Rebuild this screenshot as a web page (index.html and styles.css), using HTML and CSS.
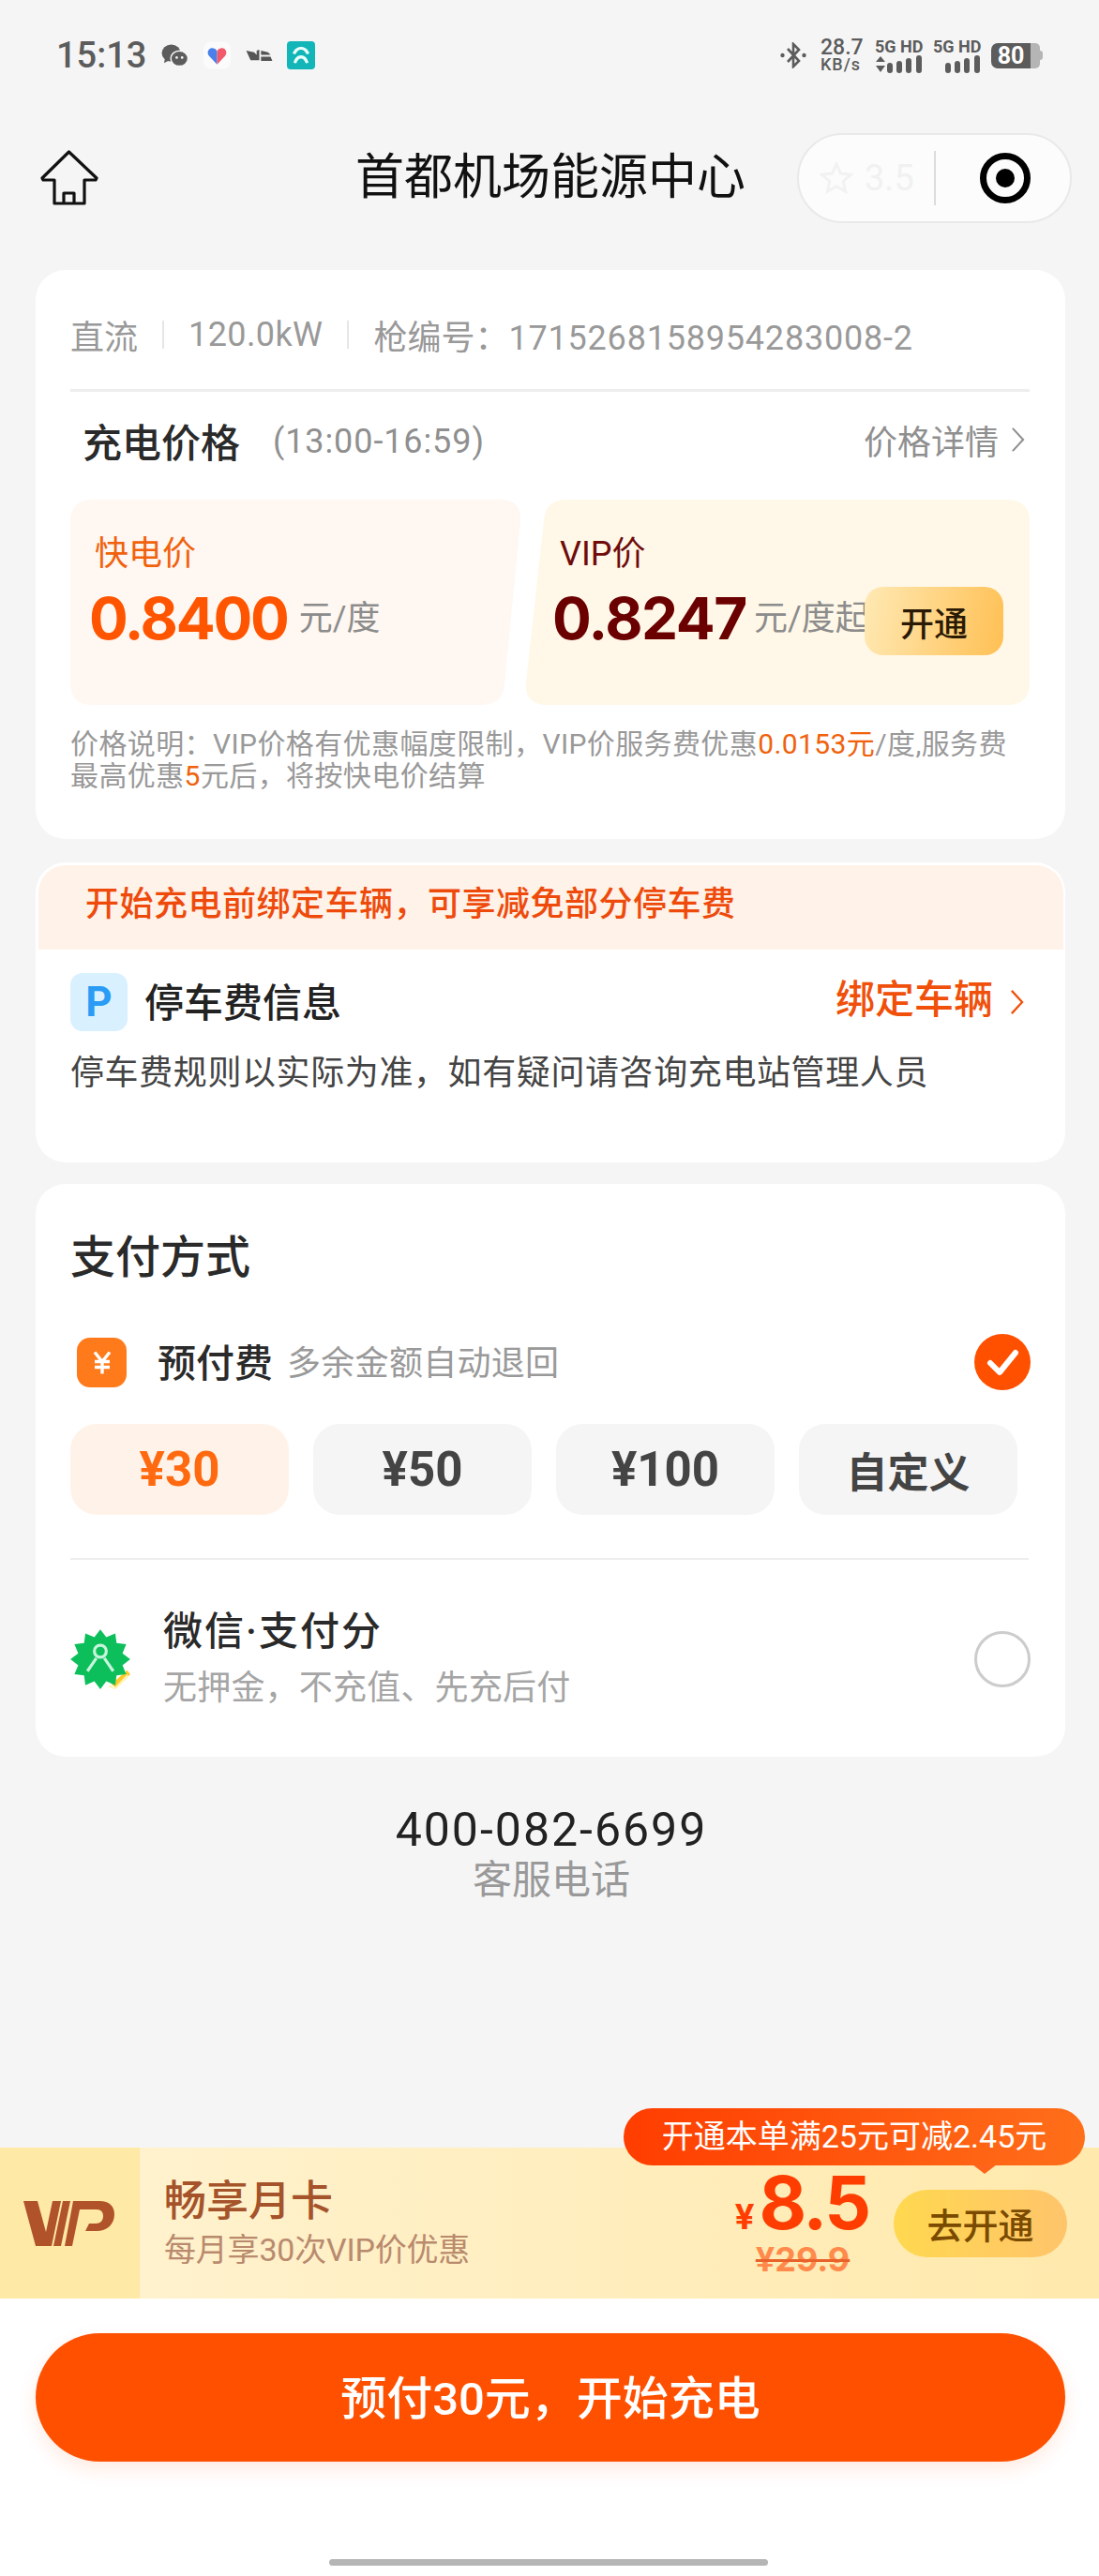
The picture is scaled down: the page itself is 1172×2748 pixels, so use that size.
FILE: index.html
```html
<!DOCTYPE html>
<html lang="zh-CN">
<head>
<meta charset="utf-8">
<title>首都机场能源中心</title>
<link rel="stylesheet" href="styles.css">
</head>
<body>
<div class="page">
  <header class="status">
    <div class="status-left">
      <span class="time">15:13</span>
      <svg class="ic-wechat" viewBox="0 0 30 28"><ellipse cx="11" cy="11" rx="10.5" ry="9.5" fill="#5c5c5c"/><path d="M4 17l-1 5 6-3z" fill="#5c5c5c"/><ellipse cx="20" cy="17" rx="9.5" ry="8.5" fill="#5c5c5c" stroke="#f6f6f6" stroke-width="1.5"/><circle cx="17" cy="16" r="1.4" fill="#f6f6f6"/><circle cx="23" cy="16" r="1.4" fill="#f6f6f6"/></svg>
      <svg class="ic-heart" viewBox="0 0 30 30"><rect width="30" height="30" rx="8" fill="#fbfbfb"/><path d="M15 25L6 15.500C3 11.500 6 6.500 10 7c2.500.3 4 1.500 5 3.500z" fill="#4a80ea"/><path d="M15 25l9-9.500C27 11.500 24 6.500 20 7c-2.500.3-4 1.500-5 3.500z" fill="#f2596b"/></svg>
      <svg class="ic-ll" viewBox="0 0 30 14"><path d="M0 1l9 2 3 3V1l3-1v12H5z" fill="#555"/><path d="M17 1l8 2 3 3H17zM17 8h11l2 5H17z" fill="#555"/></svg>
      <svg class="ic-nio" viewBox="0 0 30 30"><rect width="30" height="30" rx="4" fill="#12b5b8"/><path d="M6 13c2-5 5-7 9-7s7 2 9 7l-3 1c-1.500-3-3-5-6-5s-4.500 2-6 5z" fill="#eafffb"/><path d="M7 23c1-5 4-8 8-8s7 3 8 8l-3 .5c-1-3-2.500-5-5-5s-4 2-5 5z" fill="#eafffb"/></svg>
    </div>
    <div class="status-right">
      <svg class="ic-bt" viewBox="0 0 28 28"><path d="M8 7l12 13-6 6V2l6 6L8 21" fill="none" stroke="#5c5c5c" stroke-width="2.600"/><circle cx="2.500" cy="14" r="2.200" fill="#5c5c5c"/><circle cx="25.500" cy="14" r="2.200" fill="#5c5c5c"/></svg>
      <div class="speed"><span class="speed-num">28.7</span><span class="speed-unit">KB/s</span></div>
      <div class="sim">
        <span class="sim-label">5G HD</span>
        <svg class="ic-signal" viewBox="0 0 52 19"><path d="M1 7l5-6 5 6zM1 11h10l-5 7z" fill="#5c5c5c"/><rect x="13" y="8" width="6" height="11" rx="3" fill="#5c5c5c"/><rect x="23" y="6" width="6" height="13" rx="3" fill="#5c5c5c"/><rect x="33" y="3" width="6" height="16" rx="3" fill="#5c5c5c"/><rect x="44" y="0" width="6" height="19" rx="3" fill="#5c5c5c"/></svg>
      </div>
      <div class="sim">
        <span class="sim-label">5G HD</span>
        <svg class="ic-signal" viewBox="0 0 52 19"><rect x="13" y="8" width="6" height="11" rx="3" fill="#5c5c5c"/><rect x="23" y="6" width="6" height="13" rx="3" fill="#5c5c5c"/><rect x="33" y="3" width="6" height="16" rx="3" fill="#5c5c5c"/><rect x="44" y="0" width="6" height="19" rx="3" fill="#5c5c5c"/></svg>
      </div>
      <div class="battery"><span class="battery-fill">80</span><span class="battery-rest"></span><span class="battery-tip"></span></div>
    </div>
  </header>

  <nav class="nav">
    <svg class="ic-home" viewBox="0 0 62 60"><path d="M30.500 2L2 30l1 2h12v25h32V32h12l1-2zM25 57V46h11v11" fill="none" stroke="#111" stroke-width="3.200" stroke-linejoin="round"/></svg>
    <h1 class="nav-title">首都机场能源中心</h1>
    <div class="capsule">
      <div class="capsule-rate">
        <svg class="ic-star" viewBox="0 0 36 36"><path d="M18 3l4.500 10 11 1.200-8.200 7.300 2.300 10.800L18 26.800 8.400 32.300l2.300-10.800L2.500 14.200l11-1.200z" fill="none" stroke="#f2f2f2" stroke-width="3"/></svg>
        <span>3.5</span>
      </div>
      <span class="capsule-line"></span>
      <svg class="ic-target" viewBox="0 0 56 56"><circle cx="28" cy="28" r="23.500" fill="none" stroke="#000" stroke-width="7"/><circle cx="28" cy="28" r="10" fill="#000"/></svg>
    </div>
  </nav>

  <main class="content">
    <section class="card card-price">
      <div class="spec">
        <span>直流</span><i class="spec-sep"></i>
        <span class="spec-power">120.0kW</span><i class="spec-sep"></i>
        <span>枪编号：<b class="spec-id">1715268158954283008-2</b></span>
      </div>
      <div class="price-head">
        <div class="price-head-left"><span class="price-title">充电价格</span><span class="price-time">(13:00-16:59)</span></div>
        <div class="more">价格详情<svg class="chev" viewBox="0 0 16 30"><path d="M2 2l12 13L2 28" fill="none" stroke="currentColor" stroke-width="2.200"/></svg></div>
      </div>
      <div class="price-boxes">
        <div class="pbox pbox-fast">
          <div class="pbox-label">快电价</div>
          <div class="pbox-row"><span class="pbox-num">0.8400</span><span class="pbox-unit">元/度</span></div>
        </div>
        <div class="pbox pbox-vip">
          <div class="pbox-label">VIP价</div>
          <div class="pbox-row"><span class="pbox-num">0.8247</span><span class="pbox-unit">元/度起</span></div>
          <div class="open-btn">开通</div>
        </div>
      </div>
      <p class="note">价格说明：VIP价格有优惠幅度限制，VIP价服务费优惠<em>0.0153元</em>/度,服务费<br>最高优惠<em>5</em>元后，将按快电价结算</p>
    </section>

    <section class="card card-park">
      <div class="park-banner">开始充电前绑定车辆，可享减免部分停车费</div>
      <div class="park-body">
        <div class="park-head">
          <div class="park-left"><span class="park-p">P</span><span class="park-title">停车费信息</span></div>
          <div class="park-bind">绑定车辆<svg class="chev" viewBox="0 0 16 30"><path d="M2 2l12 13L2 28" fill="none" stroke="currentColor" stroke-width="2.400"/></svg></div>
        </div>
        <p class="park-desc">停车费规则以实际为准，如有疑问请咨询充电站管理人员</p>
      </div>
    </section>

    <section class="card card-pay">
      <h2 class="pay-title">支付方式</h2>
      <div class="pay-row">
        <span class="yen-tile"><svg viewBox="0 0 22 26"><path d="M3 2l8 10 8-10M3 12h16M3 18h16M11 12v13" fill="none" stroke="#fff" stroke-width="3.400"/></svg></span>
        <span class="pay-name">预付费</span>
        <span class="pay-hint">多余金额自动退回</span>
        <svg class="check" viewBox="0 0 60 60"><circle cx="30" cy="30" r="30" fill="#ff5000"/><path d="M17 31l10 10 17-21" fill="none" stroke="#fff" stroke-width="6" stroke-linecap="round" stroke-linejoin="round"/></svg>
      </div>
      <div class="amounts">
        <div class="amount amount-on">¥30</div>
        <div class="amount">¥50</div>
        <div class="amount">¥100</div>
        <div class="amount amount-cn">自定义</div>
      </div>
      <div class="pay-line"></div>
      <div class="wx-row">
        <svg class="wx-badge" viewBox="0 0 64 64"><path d="M43 57l16-14 3 4-14 14z" fill="#ffc828"/><polygon fill="#0cbf5b" points="32,2 37.950,9.800 47,6 48.300,15.700 58,17 54.200,26 62,32 54.200,38 58,47 48.300,48.300 47,58 37.950,54.200 32,62 26,54.200 17,58 15.700,48.300 6,47 9.800,38 2,32 9.800,26 6,17 15.700,15.700 17,6 26,9.800"/><circle cx="32" cy="24" r="6" fill="none" stroke="#c7f5dc" stroke-width="3"/><path d="M28 31l-9 13M36 31l9 13" fill="none" stroke="#c7f5dc" stroke-width="3"/><path d="M42 58l4 3 13-14 1 3-13 12-7-2z" fill="#fff3b0"/></svg>
        <div class="wx-text">
          <div class="wx-name">微信·支付分</div>
          <div class="wx-hint">无押金，不充值、先充后付</div>
        </div>
        <span class="radio"></span>
      </div>
    </section>

    <div class="service">
      <div class="service-tel">400-082-6699</div>
      <div class="service-label">客服电话</div>
    </div>
  </main>

  <footer class="bottom">
    <div class="vip-bar">
      <div class="vip-logo">
        <svg viewBox="0 0 97 48"><path d="M0 0h15l9 33L31 0h9l-10 48H13z" fill="#b0532b"/><path d="M42 0h8l-10 48h-8z" fill="#b0532b"/><path d="M53 0h28c11 0 16 6 16 14 0 11-8 18-19 18H66l4-8h7c5 0 8-3 8-8 0-4-2-7-7-7H60l-8 39H44z" fill="#b0532b"/></svg>
      </div>
      <div class="vip-text">
        <div class="vip-name">畅享月卡</div>
        <div class="vip-desc">每月享30次VIP价优惠</div>
      </div>
      <div class="vip-price">
        <div class="vip-now"><span class="vip-yen">¥</span><span class="vip-big">8.5</span></div>
        <div class="vip-old">¥29.9</div>
      </div>
      <div class="vip-btn">去开通</div>
      <div class="vip-tip">开通本单满25元可减2.45元</div>
    </div>
    <div class="action">
      <div class="start-btn">预付30元，开始充电</div>
      <div class="home-bar"></div>
    </div>
  </footer>
</div>
</body>
</html>
```

FILE: styles.css
```css
* { box-sizing: border-box; }
html, body { margin: 0; padding: 0; }
body {
  font-family: Roboto, "Noto Sans CJK SC", sans-serif;
  color: #222;
}
p, h1, h2 { margin: 0; font-weight: 500; }
.page {
  width: 1172px;
  height: 2748px;
  background: #f5f5f5;
  display: flex;
  flex-direction: column;
  overflow: hidden;
}

/* status bar */
.status {
  height: 120px;
  padding: 40px 60px 0 60px;
  display: flex;
  justify-content: space-between;
  align-items: flex-start;
  color: #5c5c5c;
}
.status-left, .status-right { display: flex; align-items: center; height: 38px; }
.time { font-size: 38px; line-height: 38px; font-weight: 500; width: 112px; }
.ic-wechat { width: 29px; height: 27px; }
.ic-heart { width: 29px; height: 30px; margin-left: 16px; }
.ic-ll { width: 29px; height: 13px; margin-left: 16px; }
.ic-nio { width: 30px; height: 30px; margin-left: 15px; }
.ic-bt { width: 28px; height: 28px; }
.status-right { gap: 0; }
.speed { display: flex; flex-direction: column; margin-left: 15px; width: 58px; }
.speed-num { font-size: 23px; line-height: 19px; font-weight: 500; }
.speed-unit { font-size: 18px; line-height: 18px; font-weight: 500; letter-spacing: 1px; }
.sim { display: flex; flex-direction: column; width: 52px; margin-right: 10px; }
.sim-label { font-size: 18px; line-height: 18px; font-weight: 700; white-space: nowrap; }
.ic-signal { width: 52px; height: 19px; }
.battery { display: flex; align-items: center; margin-left: 0; }
.battery-fill {
  width: 42px; height: 27px; background: #5c5c5c; color: #fff;
  border-radius: 7px 0 0 7px;
  font-size: 25px; line-height: 27px; font-weight: 700; text-align: center;
}
.battery-rest { width: 10px; height: 27px; background: #b5b5b5; border-radius: 0 5px 5px 0; }
.battery-tip { width: 3px; height: 10px; background: #b5b5b5; border-radius: 0 3px 3px 0; }

/* nav */
.nav {
  height: 140px;
  margin-bottom: 28px;
  padding: 0 29px 0 43px;
  display: flex;
  align-items: center;
}
.ic-home { width: 62px; height: 60px; }
.nav-title {
  font-size: 52px; line-height: 62px; font-weight: 400; color: #111;
  margin-left: 274px;
  width: 416px;
  white-space: nowrap;
}
.capsule {
  margin-left: auto;
  width: 293px; height: 96px;
  border: 2px solid #e9e9e9;
  border-radius: 48px;
  background: #fcfcfc;
  display: flex;
  align-items: center;
}
.capsule-rate { display: flex; align-items: center; gap: 12px; padding-left: 22px; width: 144px; color: #f1f1f1; font-size: 38px; }
.ic-star { width: 36px; height: 36px; }
.capsule-line { width: 2px; height: 58px; background: #dcdcdc; }
.ic-target { width: 56px; height: 56px; margin-left: 46px; }

/* cards */
.content { padding: 0 36px 0 38px; display: flex; flex-direction: column; }
.card { background: #fff; border-radius: 32px; }
.chev { width: 15px; height: 28px; margin-left: 15px; flex: none; }

.card-price { height: 607px; padding: 0 38px 0 37px; margin-bottom: 25px; }
.spec {
  height: 130px;
  padding-top: 10px;
  border-bottom: 3px solid #eeeeee;
  display: flex;
  align-items: center;
  font-size: 36px;
  color: #999;
}
.spec-id { font-weight: 400; letter-spacing: .8px; }
.spec-power { letter-spacing: .4px; }
.spec-sep { width: 2px; height: 30px; background: #e6e6e6; margin: 0 26px; }
.price-head {
  height: 102px;
  margin-bottom: 13px;
  padding-left: 13px;
  display: flex;
  align-items: center;
  justify-content: space-between;
}
.price-head-left { display: flex; align-items: center; }
.price-title { font-size: 42px; font-weight: 500; color: #2a2a2a; }
.price-time { font-size: 36px; color: #8f8f8f; margin: 3px 0 0 35px; letter-spacing: .9px; }
.more { display: flex; align-items: center; font-size: 36px; color: #8f8f8f; padding-right: 5px; }
.more .chev { margin-left: 13px; }

.price-boxes { display: flex; gap: 5px; height: 219px; }
.pbox { height: 219px; position: relative; }
.pbox-fast {
  width: 480px;
  padding: 40px 0 0 26px;
  background: #fff7f1;
  clip-path: path("M24 0H458Q481 0 480 22L463 197Q461 219 438 219H24Q0 219 0 195V24Q0 0 24 0Z");
}
.pbox-vip {
  width: 538px;
  padding: 40px 0 0 37px;
  background: #fff8e8;
  clip-path: path("M44 0H514Q538 0 538 24V195Q538 219 514 219H24Q-1 219 1 195L20 22Q22 0 44 0Z");
}
.pbox-label { font-size: 36px; line-height: 36px; font-weight: 400; }
.pbox-fast .pbox-label { color: #f0620d; }
.pbox-vip .pbox-label { color: #6e0b0b; }
.pbox-row { display: flex; align-items: center; margin-top: 18px; white-space: nowrap; }
.pbox-num { font-family: Inter, Roboto, sans-serif; font-size: 62px; line-height: 66px; font-weight: 700; }
.pbox-fast .pbox-num { color: #ff5500; margin-left: -6px; letter-spacing: -2.200px; }
.pbox-vip .pbox-num { color: #6b0000; margin-left: -8px; letter-spacing: -1.400px; }
.pbox-unit { font-size: 36px; line-height: 44px; color: #8c8c8c; margin-left: 12px; }
.pbox-vip .pbox-unit { margin-left: 8px; }
.open-btn {
  position: absolute;
  left: 362px; top: 93px;
  width: 148px; height: 73px;
  border-radius: 20px;
  background: linear-gradient(100deg, #ffe9b4, #ffc054);
  color: #2a1a05;
  font-size: 36px; font-weight: 500;
  display: flex; align-items: center; justify-content: center;
}
.note { margin-top: 25px; font-size: 30px; line-height: 34px; color: #999; font-weight: 400; white-space: nowrap; letter-spacing: .4px; }
.note em { font-style: normal; color: #f0620d; }

.card-park { height: 320px; padding: 3px 2px 0 3px; margin-bottom: 23px; }
.park-banner {
  height: 90px;
  padding-left: 50px;
  background: #fff2e8;
  border-radius: 29px 29px 0 0;
  font-size: 36px; line-height: 84px; font-weight: 500; color: #ee4a0b;
  letter-spacing: .5px;
  white-space: nowrap;
}
.park-body { padding: 25px 42px 0 34px; }
.park-head { display: flex; align-items: center; justify-content: space-between; height: 62px; }
.park-left { display: flex; align-items: center; }
.park-p {
  width: 61px; height: 62px;
  background: #d9f0ff; border-radius: 13px;
  color: #2b9cf5;
  font-size: 44px; font-weight: 700; line-height: 62px; text-align: center;
}
.park-title { font-size: 42px; font-weight: 500; color: #222; margin: 0 0 5px 18px; }
.park-bind { display: flex; align-items: center; font-size: 42px; font-weight: 500; color: #f0500a; line-height: 52px; padding-bottom: 5px; }
.park-bind .chev { margin: 5px 0 0 18px; }
.park-desc { margin-top: 23px; font-size: 36px; line-height: 44px; font-weight: 400; color: #444; letter-spacing: .6px; white-space: nowrap; }

.card-pay { height: 611px; padding: 51px 37px 0 37px; }
.pay-title { font-size: 48px; line-height: 56px; font-weight: 500; color: #2a2a2a; }
.pay-row { margin-top: 53px; height: 60px; display: flex; align-items: center; }
.yen-tile {
  width: 53px; height: 53px; margin-left: 7px;
  background: #ff7a1a; border-radius: 14px;
  display: flex; align-items: center; justify-content: center;
}
.yen-tile svg { width: 22px; height: 27px; }
.pay-name { font-size: 41px; font-weight: 500; color: #2a2a2a; margin: 0 0 5px 33px; }
.pay-hint { font-size: 36px; color: #999; margin: 0 0 5px 15px; letter-spacing: .3px; }
.check { width: 60px; height: 60px; margin-left: auto; }
.amounts { margin-top: 36px; display: flex; gap: 26px; }
.amount {
  width: 233px; height: 97px;
  background: #f5f5f5;
  border-radius: 28px;
  color: #444;
  font-family: Roboto, sans-serif;
  font-size: 51px; font-weight: 700;
  display: flex; align-items: center; justify-content: center;
}
.amount-on { background: #fff3e9; color: #ff6a10; }
.amount-cn { font-family: "Noto Sans CJK SC", sans-serif; font-size: 44px; font-weight: 700; }
.pay-line { margin-top: 46px; height: 2px; background: #eeeeee; width: 1022px; }
.wx-row { margin-top: 52px; display: flex; align-items: center; }
.wx-badge { width: 68px; height: 68px; margin-left: -2px; flex: none; }
.wx-text { margin-left: 33px; }
.wx-name { font-size: 42px; line-height: 50px; font-weight: 500; color: #2a2a2a; letter-spacing: 2px; }
.wx-hint { font-size: 36px; line-height: 46px; margin-top: 12px; color: #a5a5a5; letter-spacing: .2px; }
.radio { width: 60px; height: 60px; border: 3px solid #cccccc; border-radius: 50%; margin-left: auto; }

.service { margin-top: 50px; text-align: center; margin-right: -2px; }
.service-tel { font-size: 50px; line-height: 56px; color: #222; letter-spacing: 2px; font-weight: 400; }
.service-label { font-size: 42px; line-height: 52px; color: #999; }

/* bottom */
.bottom { margin-top: auto; }
.vip-bar {
  height: 161px;
  position: relative;
  display: flex;
  align-items: center;
  background: linear-gradient(90deg, #fff3d2, #ffe9ac);
}
.vip-logo {
  width: 149px; height: 161px;
  background: #ffe9a6;
  display: flex; align-items: center; justify-content: center;
}
.vip-logo svg { width: 97px; height: 48px; margin-left: -2px; }
.vip-text { margin-left: 26px; }
.vip-name { font-size: 45px; line-height: 54px; font-weight: 500; color: #a5532a; }
.vip-desc { font-size: 34px; line-height: 44px; color: #b98a6e; margin-top: 2px; white-space: nowrap; letter-spacing: -.2px; }
.vip-price { margin-left: auto; width: 170px; display: flex; flex-direction: column; align-items: center; }
.vip-now { display: flex; align-items: baseline; color: #ff3d00; font-family: Inter, Roboto, sans-serif; font-weight: 700; height: 74px; white-space: nowrap; }
.vip-yen { font-size: 37px; margin-right: 5px; }
.vip-big { font-size: 78px; line-height: 74px; letter-spacing: -2.500px; }
.vip-old { font-family: Inter, Roboto, sans-serif; font-size: 36px; line-height: 40px; font-weight: 700; color: #ff8a4c; text-decoration: line-through; text-decoration-color: #e8622a; margin-top: 3px; padding-left: 2px; }
.vip-btn {
  width: 185px; height: 72px; margin: 0 34px 0 13px;
  border-radius: 36px;
  background: linear-gradient(90deg, #ffd84f, #ffc46b);
  color: #7a4a00;
  font-size: 38px; font-weight: 500;
  display: flex; align-items: center; justify-content: center;
}
.vip-tip {
  position: absolute;
  left: 665px; top: -42px;
  width: 492px; height: 61px;
  border-radius: 31px;
  background: linear-gradient(90deg, #ff3d00, #ff6f1a);
  color: #fff;
  font-size: 34px; line-height: 60px; text-align: center;
  white-space: nowrap;
}
.vip-tip::after {
  content: "";
  position: absolute;
  left: 372px; top: 60px;
  border-left: 13px solid transparent;
  border-right: 13px solid transparent;
  border-top: 10px solid #ff641a;
}
.action { height: 296px; background: #fff; padding: 37px 36px 0 38px; }
.start-btn {
  height: 137px;
  border-radius: 69px;
  background: #ff5000;
  box-shadow: 0 8px 20px rgba(255, 80, 0, .12);
  color: #fff;
  font-size: 49px; font-weight: 500;
  padding-bottom: 6px;
  display: flex; align-items: center; justify-content: center;
}
.home-bar { width: 468px; height: 7px; margin: 104px 0 0 313px; border-radius: 4px; background: #b5b5b5; }
```
